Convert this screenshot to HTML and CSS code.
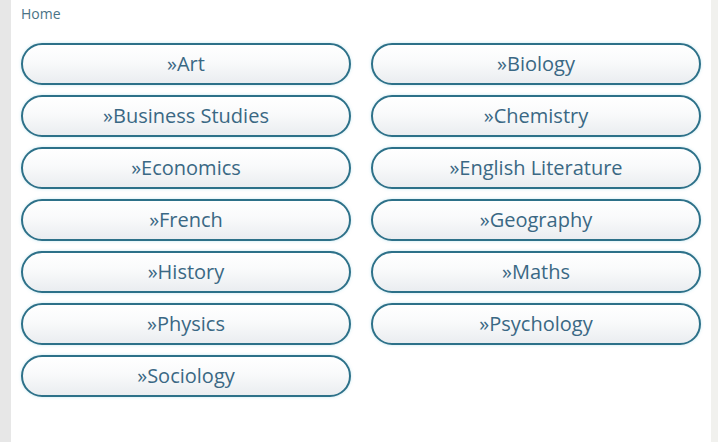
FILE: index.html
```html
<!DOCTYPE html>
<html lang="en">
<head>
    <meta charset="UTF-8">
    <meta name="viewport" content="width=device-width, initial-scale=1.0">
    <title>Subjects</title>
    <link rel="stylesheet" href="styles.css">
</head>
<body>
    <div class="page">
        <div class="breadcrumb"><a href="#">Home</a></div>
        <div class="subjects">
            <a class="subject" href="#">»Art</a>
            <a class="subject" href="#">»Biology</a>
            <a class="subject" href="#">»Business Studies</a>
            <a class="subject" href="#">»Chemistry</a>
            <a class="subject" href="#">»Economics</a>
            <a class="subject" href="#">»English Literature</a>
            <a class="subject" href="#">»French</a>
            <a class="subject" href="#">»Geography</a>
            <a class="subject" href="#">»History</a>
            <a class="subject" href="#">»Maths</a>
            <a class="subject" href="#">»Physics</a>
            <a class="subject" href="#">»Psychology</a>
            <a class="subject" href="#">»Sociology</a>
        </div>
    </div>
</body>
</html>
```

FILE: styles.css
```css
html, body {
    margin: 0;
    height: 100%;
}
body {
    font-family: "Open Sans", Arial, sans-serif;
    background-color: #e7e7e7;
}
.page {
    box-sizing: border-box;
    min-height: 100%;
    margin-left: 11px;
    background-color: #fff;
    border-right: 7px solid #f1f1ee;
    padding: 5px 10px 20px 10px;
}
.breadcrumb {
    font-size: 14px;
    line-height: 18px;
}
.breadcrumb a {
    color: #4a7386;
    text-decoration: none;
}
.subjects {
    display: grid;
    grid-template-columns: 330px 330px;
    column-gap: 20px;
    row-gap: 10px;
    margin-top: 20px;
}
.subject {
    box-sizing: border-box;
    height: 42px;
    padding-bottom: 2px;
    display: flex;
    align-items: center;
    justify-content: center;
    border: 2px solid #2d7189;
    border-radius: 21px;
    background: linear-gradient(#ffffff, #f9fafb 45%, #eaedf0);
    box-shadow: 0 0 3px rgba(140, 210, 230, 0.5);
    color: #3a6884;
    font-size: 20px;
    text-decoration: none;
}
```
